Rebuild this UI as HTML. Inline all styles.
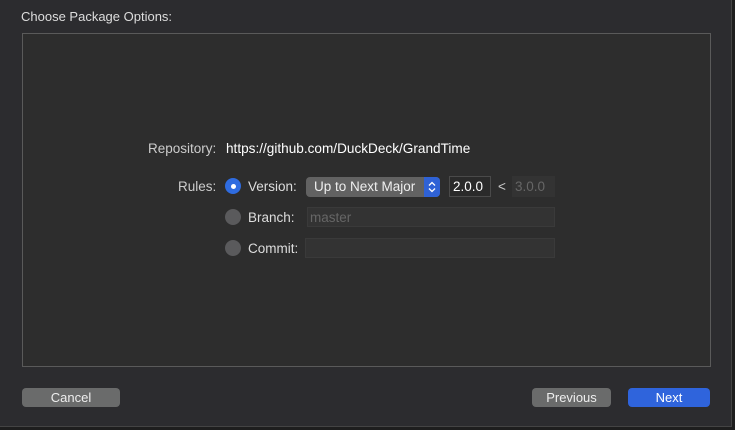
<!DOCTYPE html>
<html><head><meta charset="utf-8"><style>
*{margin:0;padding:0;box-sizing:border-box}
body{width:735px;height:430px;background:#1e1e1e;font-family:"Liberation Sans",sans-serif;position:relative;overflow:hidden;color:#ddd}
.dlg{position:absolute;left:0;top:0;width:732px;height:427px;background:#2c2c2f;border-right:1px solid #444;border-bottom:1px solid #444}
.t{position:absolute;font-size:13.5px;white-space:nowrap}
.box{position:absolute;left:22px;top:33px;width:689px;height:334px;background:#2d2d2d;border:1px solid #5a5a5a}
.radio{position:absolute;width:16px;height:16px;border-radius:50%;background:#5a5a5c}
.radio.on{background:#2f6ce0}
.radio.on::after{content:"";position:absolute;left:5.5px;top:5.5px;width:5px;height:5px;border-radius:50%;background:#fff}
.field{position:absolute;background:#333;border:1px solid #3a3a3a}
.btn{position:absolute;top:388px;height:19px;border-radius:4px;background:#6a6b6b;color:#eee;font-size:13px;text-align:center;line-height:19px}
</style></head><body>
<div class="dlg">
<div class="t" style="left:21px;top:9px;color:#ddd;font-size:13px">Choose Package Options:</div>
<div class="box"></div>
<div class="t" style="left:148px;top:141px;color:#ccc">Repository:</div>
<div class="t" style="left:226px;top:141px;color:#fff;font-size:13.6px">https://github.com/DuckDeck/GrandTime</div>
<div class="t" style="left:178px;top:179px;color:#ccc">Rules:</div>
<div class="radio on" style="left:225px;top:178px"></div>
<div class="t" style="left:248px;top:179px;color:#ddd">Version:</div>
<div style="position:absolute;left:306px;top:177px;width:134px;height:20px;border-radius:4px;background:#626262"></div>
<div style="position:absolute;left:424px;top:177px;width:16px;height:20px;border-radius:0 4px 4px 0;background:#2f62d6"><svg width="16" height="20" viewBox="0 0 16 20"><path d="M5 8.5l3-3 3 3M5 11.5l3 3 3-3" stroke="#fff" stroke-width="1.3" fill="none"/></svg></div>
<div class="t" style="left:314px;top:179px;color:#eee">Up to Next Major</div>
<div class="field" style="left:449px;top:176px;width:42px;height:21px;background:#2a2a2a;border-color:#4a4a4a"></div>
<div class="t" style="left:453px;top:179px;color:#fff">2.0.0</div>
<div class="t" style="left:498px;top:179px;color:#ccc">&lt;</div>
<div class="field" style="left:512px;top:176px;width:43px;height:21px;border-color:#333"></div>
<div class="t" style="left:515px;top:179px;color:#666">3.0.0</div>
<div class="radio" style="left:225px;top:209px"></div>
<div class="t" style="left:248px;top:210px;color:#ddd">Branch:</div>
<div class="field" style="left:307px;top:207px;width:248px;height:20px"></div>
<div class="t" style="left:310px;top:210px;color:#666">master</div>
<div class="radio" style="left:225px;top:240px"></div>
<div class="t" style="left:248px;top:241px;color:#ddd">Commit:</div>
<div class="field" style="left:305px;top:238px;width:250px;height:20px"></div>
<div class="btn" style="left:22px;width:98px">Cancel</div>
<div class="btn" style="left:532px;width:79px">Previous</div>
<div class="btn" style="left:628px;width:82px;background:#2f64dc;color:#fff">Next</div>
</div>
</body></html>
